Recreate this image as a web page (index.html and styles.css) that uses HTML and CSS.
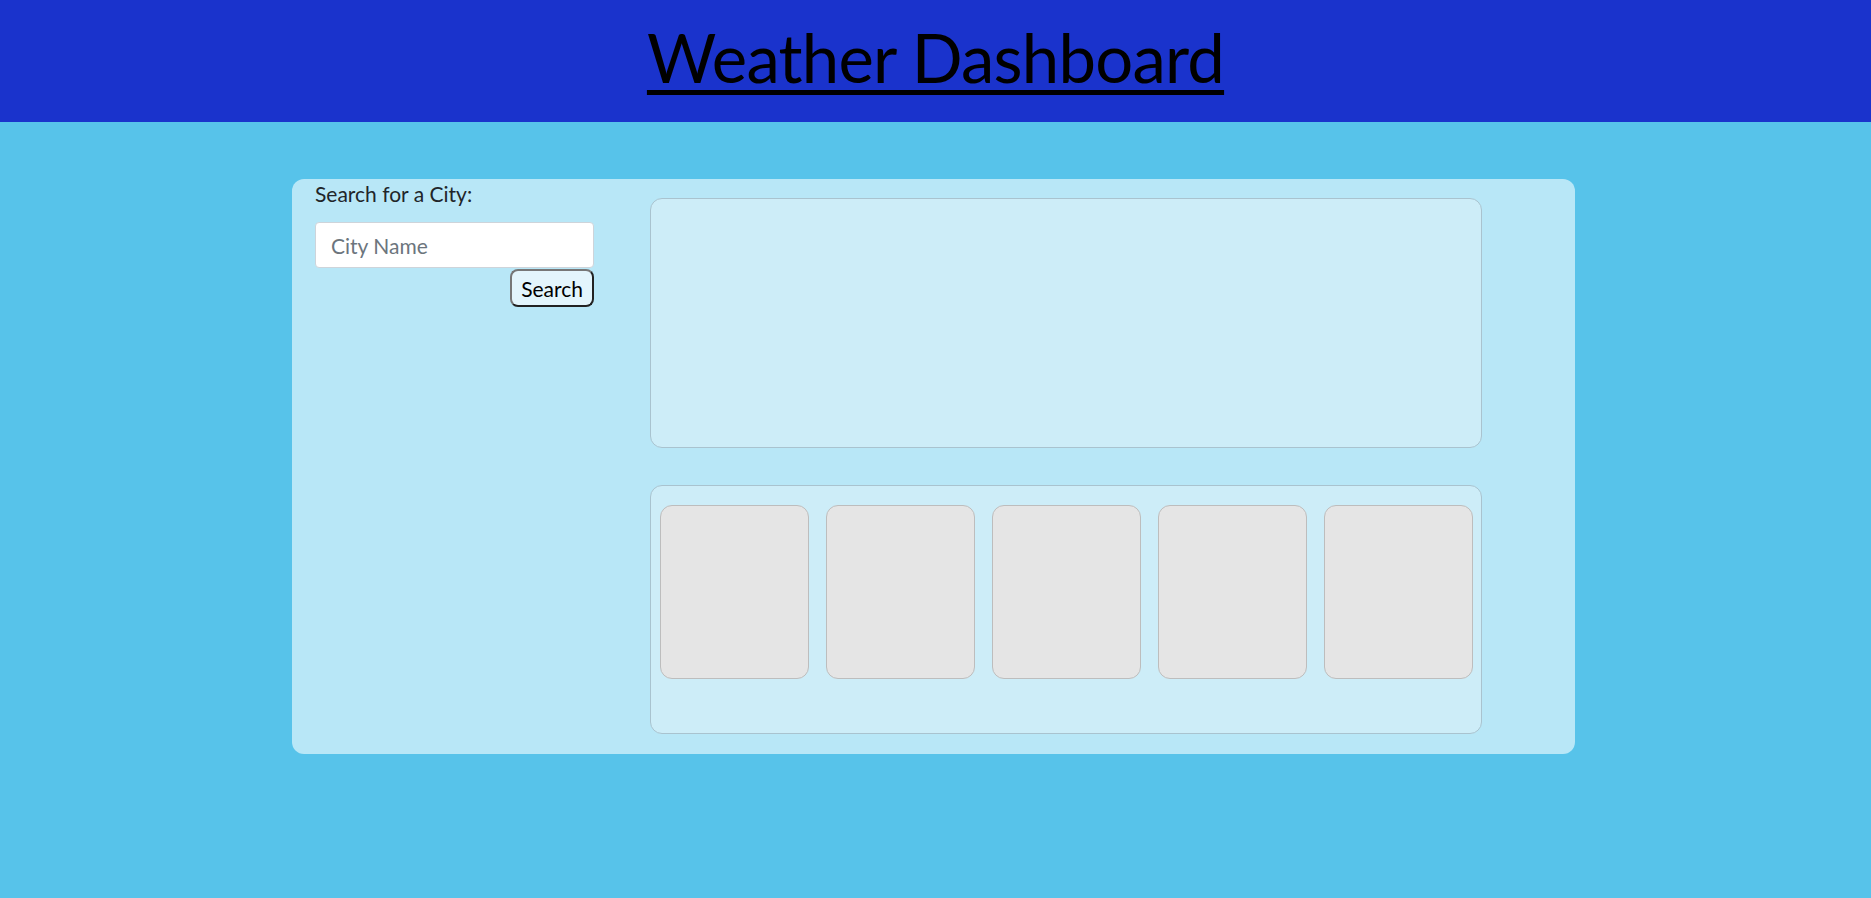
FILE: index.html
```html
<!DOCTYPE html>
<html lang="en">
<head>
<meta charset="utf-8">
<title>Weather Dashboard</title>
<link rel="stylesheet" href="styles.css">
</head>
<body>
<header class="site-header">
  <h1 class="site-title">Weather Dashboard</h1>
</header>
<main class="dashboard">
  <aside class="search-panel">
    <label class="search-label" for="city">Search for a City:</label>
    <input class="city-input" id="city" type="text" placeholder="City Name">
    <div class="btn-row">
      <button class="search-btn" type="button">Search</button>
    </div>
  </aside>
  <section class="results">
    <div class="current-box"></div>
    <div class="forecast-box">
      <div class="day-card"></div>
      <div class="day-card"></div>
      <div class="day-card"></div>
      <div class="day-card"></div>
      <div class="day-card"></div>
    </div>
  </section>
</main>
</body>
</html>
```
FILE: styles.css
```css
* { box-sizing: border-box; }

html, body {
  margin: 0;
  padding: 0;
}

body {
  background: #57c3ea;
  font-family: Lato, "Open Sans", sans-serif;
  font-size: 21px;
  color: #212529;
  min-height: 898px;
}

.site-header {
  background: #1a33cc;
  height: 122px;
  display: flex;
  justify-content: center;
}

.site-title {
  margin: 0;
  padding-top: 15px;
  font-weight: 400;
  font-size: 67px;
  letter-spacing: -0.75px;
  line-height: 84px;
  color: #000;
  text-decoration: underline;
  text-decoration-thickness: 5px;
  text-underline-offset: 7px;
}

.dashboard {
  width: 1283px;
  margin: 57px 0 0 292px;
  background: #b8e7f7;
  border-radius: 12px;
  display: flex;
  padding: 0 93px 20px 23px;
  height: 575px;
}

.search-panel {
  width: 279px;
  display: flex;
  flex-direction: column;
}

.search-label {
  line-height: 30px;
  margin-bottom: 13px;
}

.city-input {
  width: 279px;
  height: 46px;
  border: 1px solid #ced4da;
  border-radius: 4px;
  background: #fff;
  padding: 0 15px;
  font-family: inherit;
  font-size: 21px;
  color: #212529;
}

.city-input::placeholder {
  color: #6c757d;
}

.btn-row {
  display: flex;
  justify-content: flex-end;
  margin-top: 1px;
}

.search-btn {
  height: 38px;
  padding: 0 9px;
  font-family: inherit;
  font-size: 21px;
  color: #000;
  background: #e3f5fc;
  border: 2px solid;
  border-color: #777 #222 #222 #777;
  border-radius: 8px;
}

.results {
  margin-left: 56px;
  width: 832px;
  padding-top: 19px;
  display: flex;
  flex-direction: column;
  gap: 37px;
}

.current-box {
  height: 250px;
  background: #cdedf8;
  border: 1px solid #a9c3cf;
  border-radius: 12px;
}

.forecast-box {
  height: 249px;
  background: #cdedf8;
  border: 1px solid #a9c3cf;
  border-radius: 12px;
  padding: 19px 8px 0 9px;
  display: flex;
  align-items: flex-start;
  gap: 17px;
}

.day-card {
  width: 149px;
  height: 174px;
  background: #e5e5e5;
  border: 1px solid #bdbdbd;
  border-radius: 12px;
}
```
